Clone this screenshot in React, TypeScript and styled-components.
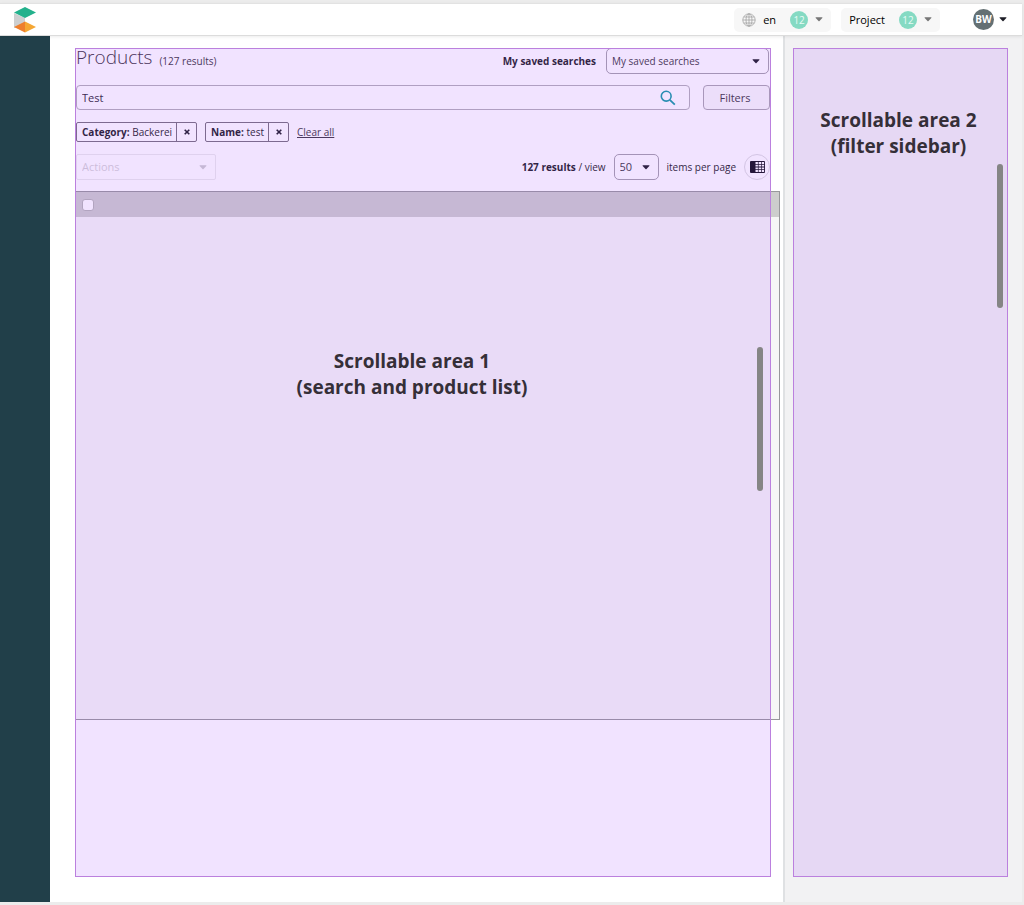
import React from "react";
import styled, { createGlobalStyle } from "styled-components";

const GlobalStyle = createGlobalStyle`
  *, *::before, *::after { box-sizing: border-box; }
  body { margin: 0; background: #e9e9e9; }
  body, button, input, select { font-family: "Open Sans", "Noto Sans", sans-serif; }
`;

const Page = styled.div`
  display: flex;
  flex-direction: column;
  min-height: 100vh;
  padding: 3px 2px 3px 0;
  background: #ececec;
  color: #1d1d26;
  font-size: 10px;
  line-height: 16px;
`;

const Header = styled.header`
  position: relative;
  display: flex;
  align-items: center;
  height: 33px;
  padding: 0 15px 0 12px;
  background: #fff;
  border-top: 1px solid #e2e2e2;
  border-bottom: 1px solid #dcdcdc;
  box-shadow: 0 1px 3px rgba(0, 0, 0, 0.08);
`;

const HeaderMenus = styled.nav`
  display: flex;
  align-items: center;
  gap: 10px;
  margin-left: auto;
`;

const MenuButton = styled.button<{ $plain?: boolean }>`
  display: flex;
  align-items: center;
  gap: ${(p) => (p.$plain ? 5 : 7)}px;
  height: 24px;
  margin-left: ${(p) => (p.$plain ? 23 : 0)}px;
  padding: 0 ${(p) => (p.$plain ? 0 : 8)}px;
  border: 0;
  border-radius: 5px;
  background: ${(p) => (p.$plain ? "transparent" : "#f7f7f7")};
  color: #000;
  font-size: 11px;
  line-height: 16px;
`;

const CountBadge = styled.span`
  width: 18px;
  height: 18px;
  margin-left: 7px;
  border-radius: 50%;
  background: #85dac3;
  color: #e8fbf5;
  font-size: 10px;
  line-height: 18px;
  text-align: center;
`;

const Avatar = styled.span`
  width: 21px;
  height: 21px;
  border-radius: 50%;
  background: #647073;
  color: #fff;
  font-size: 10px;
  font-weight: 700;
  line-height: 21px;
  text-align: center;
`;

const Body = styled.div`
  display: flex;
  flex: 1;
`;

const Rail = styled.aside`
  flex: none;
  width: 50px;
  background: #213f49;
`;

const Main = styled.main`
  display: flex;
  flex: 1;
  min-width: 0;
  padding: 12px 12px 25px 25px;
  background: #fff;
`;

const FilterPanel = styled.aside`
  display: flex;
  flex: none;
  width: 239px;
  padding: 12px 14px 25px 8px;
  border-left: 2px solid #dfe1e3;
  background: #f2f2f3;
`;

const Region = styled.section<{ $bottom?: number }>`
  position: relative;
  display: flex;
  flex: 1;
  flex-direction: column;
  min-width: 0;
  padding: 0 1px ${(p) => p.$bottom ?? 0}px;
`;

const Highlight = styled.div<{ $top: number; $right: number }>`
  position: absolute;
  inset: 0;
  padding: ${(p) => p.$top}px ${(p) => p.$right}px 0 0;
  border: 1px solid #bb80de;
  background: rgba(162, 68, 255, 0.15);
  color: #352f38;
  font-size: 19px;
  font-weight: 700;
  line-height: 26px;
  text-align: center;
  pointer-events: none;
`;

const ScrollThumb = styled.span<{ $top: number; $right: number }>`
  position: absolute;
  top: ${(p) => p.$top}px;
  right: ${(p) => p.$right}px;
  width: 6px;
  height: 144px;
  border-radius: 3px;
  background: #858585;
`;

const Row = styled.div<{ $height: number; $gap: number; $before?: number }>`
  display: flex;
  align-items: center;
  gap: ${(p) => p.$gap}px;
  height: ${(p) => p.$height}px;
  margin-top: ${(p) => p.$before ?? 0}px;
`;

const TitleRow = styled(Row)`
  padding-right: 1px;
`;

const Title = styled.h1`
  margin: 0;
  padding-bottom: 8px;
  color: #3b3340;
  font-size: 19px;
  font-weight: 300;
  line-height: 24px;
`;

const Muted = styled.span`
  color: #3c3842;
`;

const SavedLabel = styled.label`
  margin: 0 3px 0 auto;
  font-size: 10px;
  font-weight: 700;
`;

const SelectBox = styled.span<{ $width: number; $faint?: boolean; $size?: number }>`
  position: relative;
  display: flex;
  width: ${(p) => p.$width}px;
  height: 26px;
  opacity: ${(p) => (p.$faint ? 0.22 : 1)};

  select {
    width: 100%;
    padding: 0 20px 0 5px;
    border: 1px solid #a5a1ab;
    border-radius: ${(p) => (p.$faint ? 2 : 5)}px;
    background: transparent;
    color: #3c3842;
    font-size: ${(p) => p.$size ?? 11}px;
    line-height: 16px;
    opacity: 1;
    appearance: none;
  }

  svg {
    position: absolute;
    top: 11px;
    right: 9px;
  }
`;

const SearchBox = styled.div`
  display: flex;
  align-items: center;
  flex: 1;
  height: 25px;
  padding: 0 13px 0 5px;
  border: 1px solid #b3afb8;
  border-radius: 4px;

  input {
    flex: 1;
    min-width: 0;
    padding: 0;
    border: 0;
    outline: 0;
    background: transparent;
    color: #2e2935;
    font-size: 11px;
  }

  button {
    display: flex;
    padding: 0;
    border: 0;
    background: transparent;
  }
`;

const FilterButton = styled.button`
  width: 67px;
  height: 25px;
  padding: 0 3px 0 0;
  border: 1px solid #aba6b0;
  border-radius: 4px;
  background: #fafafa;
  color: #3c3842;
  font-size: 11px;
`;

const Chip = styled.span`
  display: flex;
  align-items: stretch;
  height: 20px;
  border: 1px solid #77717d;
  border-radius: 2px;
  line-height: 18px;

  span {
    padding: 0 4px 0 5px;
  }

  button {
    display: flex;
    align-items: center;
    justify-content: center;
    width: 20px;
    padding: 0;
    border: 0;
    border-left: 1px solid #77717d;
    background: transparent;
  }
`;

const ClearLink = styled.a`
  color: #3c3842;
  text-decoration: underline;
`;

const Pager = styled.div`
  display: flex;
  align-items: center;
  gap: 8px;
  margin-left: auto;
`;

const ViewToggle = styled.button`
  display: flex;
  align-items: center;
  justify-content: center;
  width: 26px;
  height: 26px;
  padding: 0;
  border: 1px solid #dcdcdf;
  border-radius: 50%;
  background: transparent;
`;

const TableFrame = styled.div`
  flex: 1;
  min-height: 120px;
  margin: 10px -10px 0 -1px;
  border: 1px solid #97979b;
  border-left-color: transparent;
  background: #f6f6f6;
`;

const ProductTable = styled.table`
  width: 100%;
  border-collapse: collapse;

  th {
    height: 25px;
    padding: 0 6px;
    background: #cdcdcd;
    text-align: left;
  }

  input {
    display: block;
    width: 12px;
    height: 12px;
    margin: 0;
    border: 1px solid #b5b5b5;
    border-radius: 3px;
    background: #fff;
    appearance: none;
  }
`;

const Caret = ({ color = "#1d1d26" }: { color?: string }) => (
  <svg width="8" height="5" viewBox="0 0 8 5" aria-hidden="true">
    <path d="M1 .3h6q.8 0 .3.700L4.500 4.100q-.5.5-1 0L.7 1Q.2.3 1 .3z" fill={color} />
  </svg>
);

const Logo = () => (
  <svg width="25" height="28" viewBox="0 0 25 28" role="img" aria-label="Logo">
    <path d="M2 7l11 5v8L2 22z" fill="#cdcfd0" />
    <path d="M13 1l11 5.5L13 12 2 6.5z" fill="#23b18c" />
    <path d="M13 15.500v11L2 21z" fill="#ee7f2d" />
    <path d="M13 15.500L24 21l-11 5.500z" fill="#f5a733" />
  </svg>
);

const Globe = () => (
  <svg width="14" height="14" viewBox="0 0 14 14" fill="none" stroke="#999" strokeWidth=".7" aria-hidden="true">
    <circle cx="7" cy="7" r="6.200" />
    <ellipse cx="7" cy="7" rx="3" ry="6.200" />
    <path d="M7 .8v12.400M.8 7h12.400M1.700 4h10.600M1.700 10h10.600" />
  </svg>
);

const Magnifier = () => (
  <svg width="16" height="16" viewBox="0 0 16 16" fill="none" stroke="#149ba5" aria-hidden="true">
    <circle cx="6.200" cy="6.200" r="4.900" strokeWidth="1.600" />
    <path d="M9.800 9.800l5 4.800" strokeWidth="1.800" />
  </svg>
);

const Cross = () => (
  <svg width="6" height="6" viewBox="0 0 6 6" stroke="#1d1d26" strokeWidth="1.600" aria-hidden="true">
    <path d="M.7.7l4.600 4.600M5.300.7L.7 5.300" />
  </svg>
);

const Columns = () => (
  <svg width="15" height="12" viewBox="0 0 15 12" aria-hidden="true">
    <rect width="15" height="12" rx="1" fill="#101018" />
    <path
      d="M5.500 1h2.400v1.900H5.500zM8.600 1H11v1.900H8.600zM11.700 1h2.400v1.900h-2.400zM5.500 3.700h2.400v1.900H5.500zM8.600 3.700H11v1.900H8.600zM11.700 3.700h2.400v1.900h-2.400zM5.500 6.400h2.400v1.900H5.500zM8.600 6.400H11v1.900H8.600zM11.700 6.400h2.400v1.900h-2.400zM5.500 9.100h2.400V11H5.500zM8.600 9.100H11V11H8.600zM11.700 9.100h2.400V11h-2.400z"
      fill="#fff"
    />
  </svg>
);

const filters = [
  { name: "Category", value: "Backerei" },
  { name: "Name", value: "test" },
];

export default function App() {
  return (
    <>
      <GlobalStyle />
      <Page>
        <Header>
          <Logo />
          <HeaderMenus>
            <MenuButton type="button">
              <Globe />
              en
              <CountBadge>12</CountBadge>
              <Caret color="#777" />
            </MenuButton>
            <MenuButton type="button">
              Project
              <CountBadge>12</CountBadge>
              <Caret color="#777" />
            </MenuButton>
            <MenuButton type="button" $plain>
              <Avatar>BW</Avatar>
              <Caret />
            </MenuButton>
          </HeaderMenus>
        </Header>
        <Body>
          <Rail />
          <Main>
            <Region $bottom={157}>
              <TitleRow $height={25} $gap={7}>
                <Title>Products</Title>
                <Muted>(127 results)</Muted>
                <SavedLabel htmlFor="saved">My saved searches</SavedLabel>
                <SelectBox $width={163} $size={10}>
                  <select id="saved">
                    <option>My saved searches</option>
                  </select>
                  <Caret />
                </SelectBox>
              </TitleRow>
              <Row $height={25} $gap={13} $before={12}>
                <SearchBox>
                  <input type="text" aria-label="Search products" defaultValue="Test" />
                  <button type="button" aria-label="Search">
                    <Magnifier />
                  </button>
                </SearchBox>
                <FilterButton type="button">Filters</FilterButton>
              </Row>
              <Row $height={20} $gap={8} $before={12}>
                {filters.map((f) => (
                  <Chip key={f.name}>
                    <span>
                      <b>{f.name}:</b> {f.value}
                    </span>
                    <button type="button" aria-label={`Remove ${f.name}`}>
                      <Cross />
                    </button>
                  </Chip>
                ))}
                <ClearLink href="#">Clear all</ClearLink>
              </Row>
              <Row $height={28} $gap={8} $before={11}>
                <SelectBox $width={140} $faint>
                  <select aria-label="Actions" disabled>
                    <option>Actions</option>
                  </select>
                  <Caret />
                </SelectBox>
                <Pager>
                  <span>
                    <b>127 results</b> / view
                  </span>
                  <SelectBox $width={45}>
                    <select id="page-size">
                      <option>50</option>
                    </select>
                    <Caret />
                  </SelectBox>
                  <label htmlFor="page-size">items per page</label>
                  <ViewToggle type="button" aria-label="Columns">
                    <Columns />
                  </ViewToggle>
                </Pager>
              </Row>
              <TableFrame>
                <ProductTable>
                  <thead>
                    <tr>
                      <th>
                        <input type="checkbox" aria-label="Select all products" />
                      </th>
                    </tr>
                  </thead>
                </ProductTable>
              </TableFrame>
              <Highlight $top={299} $right={22}>
                Scrollable area 1
                <br />
                (search and product list)
                <ScrollThumb $top={298} $right={7} />
              </Highlight>
            </Region>
          </Main>
          <FilterPanel>
            <Region>
              <Highlight $top={58} $right={4}>
                Scrollable area 2
                <br />
                (filter sidebar)
                <ScrollThumb $top={115} $right={4} />
              </Highlight>
            </Region>
          </FilterPanel>
        </Body>
      </Page>
    </>
  );
}
